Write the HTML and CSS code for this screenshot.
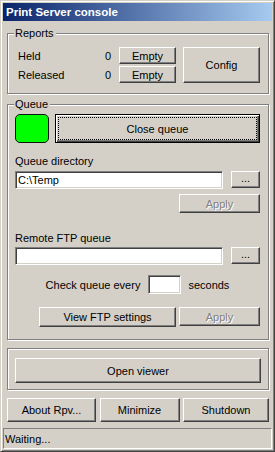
FILE: index.html
```html
<!DOCTYPE html>
<html lang="en">
<head>
    <meta charset="UTF-8">
    <title>Print Server console</title>
    <link rel="stylesheet" href="styles.css">
</head>
<body>
    <div class="window">
        <div class="titlebar">Print Server console</div>

        <div class="content">
            <div class="group reports">
                <span class="group-label">Reports</span>
                <div class="report-rows">
                    <div class="report-row">
                        <span class="report-name">Held</span>
                        <span class="report-count">0</span>
                        <button class="btn btn-empty">Empty</button>
                    </div>
                    <div class="report-row">
                        <span class="report-name">Released</span>
                        <span class="report-count">0</span>
                        <button class="btn btn-empty">Empty</button>
                    </div>
                </div>
                <button class="btn btn-config">Config</button>
            </div>

            <div class="group queue">
                <span class="group-label">Queue</span>
                <div class="queue-top">
                    <div class="status-light"></div>
                    <button class="btn btn-default"><span class="focus">Close queue</span></button>
                </div>

                <label class="field-label label-dir">Queue directory</label>
                <div class="field-row">
                    <input class="textbox" type="text" value="C:\Temp">
                    <button class="btn btn-browse">...</button>
                </div>
                <div class="apply-row">
                    <button class="btn btn-apply" disabled>Apply</button>
                </div>

                <label class="field-label label-ftp">Remote FTP queue</label>
                <div class="field-row">
                    <input class="textbox" type="text" value="">
                    <button class="btn btn-browse">...</button>
                </div>

                <div class="interval-row">
                    <span>Check queue every</span>
                    <input class="textbox interval" type="text" value="">
                    <span>seconds</span>
                </div>

                <div class="ftp-actions">
                    <button class="btn btn-ftp">View FTP settings</button>
                    <button class="btn btn-apply" disabled>Apply</button>
                </div>
            </div>

            <div class="group viewer">
                <button class="btn btn-viewer">Open viewer</button>
            </div>

            <div class="bottom-buttons">
                <button class="btn">About Rpv...</button>
                <button class="btn">Minimize</button>
                <button class="btn">Shutdown</button>
            </div>
        </div>

        <div class="statusbar">Waiting...</div>
    </div>
</body>
</html>
```

FILE: styles.css
```css
* {
    margin: 0;
    padding: 0;
    box-sizing: border-box;
}

body {
    background: #d4d0c8;
    font-family: "Liberation Sans", Arial, sans-serif;
    font-size: 11px;
    color: #000;
}

.window {
    width: 275px;
    height: 452px;
    background: #d4d0c8;
    border: 1px solid;
    border-color: #d4d0c8 #404040 #404040 #d4d0c8;
    box-shadow: inset 1px 1px #fff, inset -1px -1px #808080;
    padding: 2px;
    display: flex;
    flex-direction: column;
}

.titlebar {
    height: 18px;
    padding-left: 3px;
    display: flex;
    align-items: center;
    background: linear-gradient(to right, #0a246a, #a6caf0);
    color: #fff;
    font-weight: bold;
    font-size: 11.5px;
}

.content {
    padding: 0 3px 0 4px;
    display: flex;
    flex-direction: column;
}

/* etched group box */
.group {
    position: relative;
    border: 1px solid #808080;
    box-shadow: inset 1px 1px #fff, 1px 1px #fff;
}

.group-label {
    position: absolute;
    top: -7px;
    left: 6px;
    padding: 0 2px 0 1px;
    line-height: 13px;
    background: #d4d0c8;
}

/* buttons */
.btn {
    font: inherit;
    color: #000;
    background: #d4d0c8;
    border: 1px solid;
    border-color: #fff #404040 #404040 #fff;
    box-shadow: inset -1px -1px #808080;
    display: flex;
    align-items: center;
    justify-content: center;
}

.btn:disabled {
    color: #808080;
    text-shadow: 1px 1px #fff;
}

.btn-default {
    flex: 1;
    padding: 2px;
    border: 1px solid #000;
    box-shadow: inset 1px 1px #fff, inset -1px -1px #404040, inset -2px -2px #808080;
}

.focus {
    flex: 1;
    align-self: stretch;
    display: flex;
    align-items: center;
    justify-content: center;
    border: 1px dotted #000;
}

/* text boxes */
.textbox {
    font: inherit;
    color: #000;
    height: 18px;
    padding: 0 2px;
    background: #fff;
    border: 1px solid;
    border-color: #808080 #fff #fff #808080;
    box-shadow: inset 1px 1px #404040, inset -1px -1px #d4d0c8;
    outline: none;
}

/* reports */
.reports {
    margin-top: 12px;
    padding: 13px 8px 10px 10px;
    display: flex;
}

.report-rows {
    flex: 1;
    display: flex;
    flex-direction: column;
    gap: 2px;
}

.report-row {
    height: 17px;
    display: flex;
    align-items: center;
}

.report-name {
    flex: 1;
}

.btn-empty {
    width: 57px;
    height: 17px;
    margin-left: 8px;
}

.btn-config {
    width: 77px;
    margin-left: 7px;
}

/* queue */
.queue {
    margin-top: 10px;
    padding: 9px 8px 12px 7px;
    display: flex;
    flex-direction: column;
}

.queue-top {
    display: flex;
    gap: 6px;
    height: 29px;
}

.status-light {
    width: 34px;
    background: #00ff00;
    border: 1px solid #101010;
    border-radius: 5px;
}

.field-label {
    line-height: 13px;
}

.label-dir {
    margin-top: 12px;
    margin-bottom: 3px;
}

.label-ftp {
    margin-top: 19px;
    margin-bottom: 2px;
}

.field-row {
    display: flex;
    gap: 8px;
}

.field-row .textbox {
    flex: 1;
    min-width: 0;
}

.btn-browse {
    width: 29px;
    height: 17px;
    padding-bottom: 3px;
}

.apply-row {
    margin-top: 5px;
    display: flex;
    justify-content: flex-end;
}

.btn-apply {
    width: 81px;
    height: 19px;
}

.interval-row {
    margin-top: 10px;
    display: flex;
    align-items: center;
    justify-content: center;
    gap: 8px;
}

.interval-row .interval {
    width: 33px;
    height: 19px;
    margin-right: -1px;
}

.ftp-actions {
    margin-top: 13px;
    display: flex;
    justify-content: flex-end;
    gap: 3px;
}

.btn-ftp {
    width: 137px;
    height: 20px;
}

/* viewer */
.viewer {
    margin-top: 8px;
    padding: 9px 7px 6px 7px;
}

.btn-viewer {
    width: 100%;
    height: 25px;
}

.bottom-buttons {
    margin-top: 8px;
    display: grid;
    grid-template-columns: 89px 80px 86px;
    justify-content: space-between;
}

.bottom-buttons .btn {
    height: 24px;
}

.statusbar {
    margin-top: 6px;
    height: 21px;
    padding-left: 1px;
    display: flex;
    align-items: center;
    border: 1px solid;
    border-color: #808080 #fff #fff #808080;
}
```
